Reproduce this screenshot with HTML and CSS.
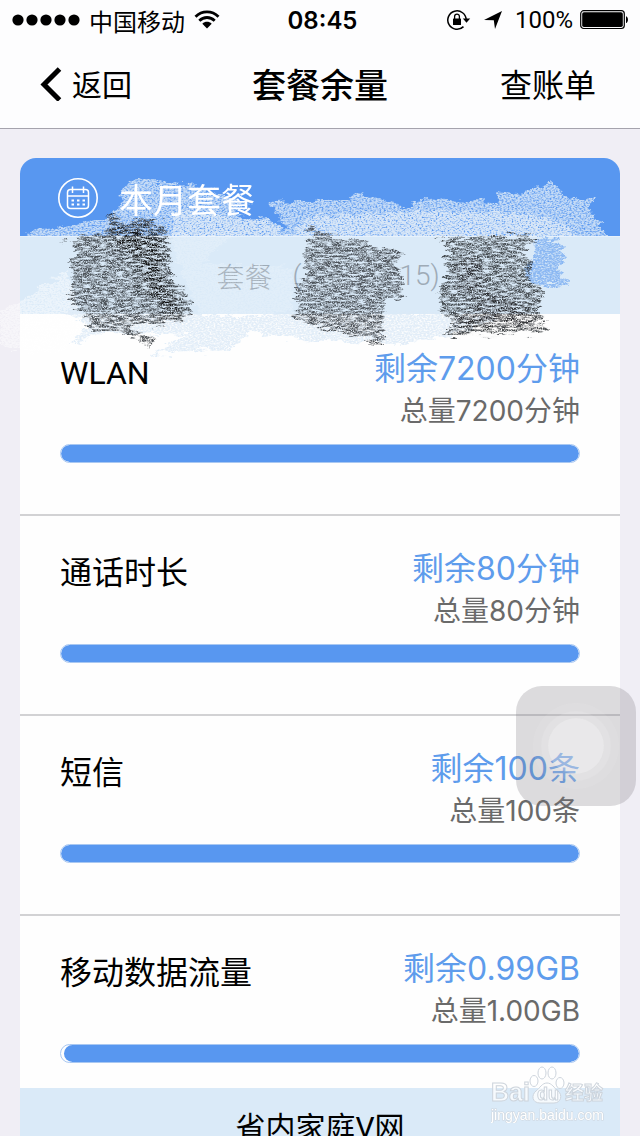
FILE: index.html
```
<!DOCTYPE html>
<html lang="zh-CN">
<head>
  <meta charset="UTF-8" />
  <meta name="viewport" content="width=device-width, initial-scale=1" />
  <title>套餐余量</title>
  <link rel="stylesheet" href="styles.css">
</head>
<body>
  <div class="page">
    <header class="top">
      <div class="status">
        <div class="status-left">
          <svg class="signal" width="68" height="12" viewBox="0 0 68 12">
            <circle cx="6" cy="6" r="5.6"/><circle cx="20" cy="6" r="5.6"/><circle cx="34" cy="6" r="5.6"/><circle cx="48" cy="6" r="5.6"/><circle cx="62" cy="6" r="5.6"/>
          </svg>
          <span>中国移动</span>
          <svg width="26" height="20" viewBox="0 0 26 20">
            <path d="M1.5 6.8C8 .3 18 .3 24.500 6.800M5.300 10.700c4.400-4.300 11-4.300 15.400 0" fill="none" stroke="#000" stroke-width="2.800"/>
            <path d="M13 18.500L8.300 13.700c2.700-2.500 6.700-2.500 9.400 0z"/>
          </svg>
        </div>
        <div class="status-time">08:45</div>
        <div class="status-right">
          <svg width="24" height="22" viewBox="0 0 24 22">
            <path d="M16.500 17.600A9.200 9.200 0 1 1 19.200 11" fill="none" stroke="#000" stroke-width="1.500"/>
            <path d="M15.800 9.500h7.400l-3.700 4.200z"/>
            <rect x="6" y="9.500" width="8" height="6.500" rx="0.600"/>
            <path d="M7.600 10V7.500a2.400 2.400 0 0 1 4.800 0V10" fill="none" stroke="#000" stroke-width="1.300"/>
          </svg>
          <svg width="18" height="18" viewBox="0 0 18 18"><path d="M18 0L11 18 9.800 9.300 0 9z"/></svg>
          <span class="percent">100%</span>
          <svg width="49" height="20" viewBox="0 0 49 20">
            <rect x="0.700" y="0.700" width="43.600" height="17.800" rx="3" fill="none" stroke="#000" stroke-width="1.200"/>
            <rect x="2.200" y="2.200" width="40.600" height="14.800" rx="1.800"/>
            <path d="M46 6.200c2.600.4 2.600 6.400 0 6.800z"/>
          </svg>
        </div>
      </div>
      <nav class="nav">
        <button class="nav-btn back">
          <svg width="22" height="36" viewBox="0 0 22 36"><path d="M19.500 4L4 19.500 19.500 35" fill="none" stroke="#000" stroke-width="5"/></svg>
          <span>返回</span>
        </button>
        <h1>套餐余量</h1>
        <button class="nav-btn bill">查账单</button>
      </nav>
    </header>

    <main class="card">
      <div class="card-head">
        <svg class="calendar" width="40" height="40" viewBox="0 0 40 40" fill="none" stroke="#fff">
          <circle cx="20" cy="20" r="19.200" stroke-width="1.600"/>
          <rect x="9.500" y="11.500" width="21" height="19" rx="3" stroke-width="1.500"/>
          <path d="M9.500 18h21M14.500 8.500v6.500M25.500 8.500v6.500" stroke-width="1.500"/>
          <path d="M13.500 22.500h13.500M13.500 26.500h13.500" stroke-width="2" stroke-dasharray="2.500 3"/>
        </svg>
        <h2>本月套餐</h2>
      </div>
      <div class="plan"><span>套餐</span><span class="paren">(</span><span class="plan-end">15)</span></div>

      <section class="item">
        <div class="info">
          <h3>WLAN</h3>
          <div class="amount"><p class="left">剩余7200分钟</p><p class="total">总量7200分钟</p></div>
        </div>
        <div class="bar"><div class="fill" style="width:100%"></div></div>
      </section>
      <section class="item">
        <div class="info">
          <h3>通话时长</h3>
          <div class="amount"><p class="left">剩余80分钟</p><p class="total">总量80分钟</p></div>
        </div>
        <div class="bar"><div class="fill" style="width:100%"></div></div>
      </section>
      <section class="item">
        <div class="info">
          <h3>短信</h3>
          <div class="amount"><p class="left">剩余100条</p><p class="total">总量100条</p></div>
        </div>
        <div class="bar"><div class="fill" style="width:100%"></div></div>
      </section>
      <section class="item last">
        <div class="info">
          <h3>移动数据流量</h3>
          <div class="amount"><p class="left">剩余0.99GB</p><p class="total">总量1.00GB</p></div>
        </div>
        <div class="bar"><div class="fill" style="width:99.5%"></div></div>
      </section>
      <div class="plan next">省内家庭V网</div>

      <!-- crayon marks over the plan name -->
      <svg class="scribble" viewBox="0 158 640 210" preserveAspectRatio="none" aria-hidden="true">
        <defs>
          <filter id="chalk" x="-5%" y="-10%" width="110%" height="120%" color-interpolation-filters="sRGB">
            <feTurbulence type="fractalNoise" baseFrequency="0.08 0.2" numOctaves="4" seed="4" result="edge"/>
            <feDisplacementMap in="SourceGraphic" in2="edge" scale="14" xChannelSelector="R" yChannelSelector="G" result="shape"/>
            <feTurbulence type="fractalNoise" baseFrequency="0.5 0.7" numOctaves="3" seed="8"/>
            <feColorMatrix values="0 0 0 0 0  0 0 0 0 0  0 0 0 0 0  0 0 0 2.5 -0.5" result="mask"/>
            <feComposite in="shape" in2="mask" operator="in"/>
          </filter>
          <filter id="crayon" x="-10%" y="-10%" width="120%" height="120%" color-interpolation-filters="sRGB">
            <feTurbulence type="fractalNoise" baseFrequency="0.06 0.25" numOctaves="4" seed="3" result="edge"/>
            <feDisplacementMap in="SourceGraphic" in2="edge" scale="18" xChannelSelector="R" yChannelSelector="G" result="shape"/>
            <feTurbulence type="fractalNoise" baseFrequency="0.12 0.5" numOctaves="4" seed="11"/>
            <feColorMatrix values="0 0 0 0 0  0 0 0 0 0  0 0 0 0 0  0 0 0 3 -0.85" result="mask"/>
            <feComposite in="shape" in2="mask" operator="in" result="strokes"/>
            <feTurbulence type="fractalNoise" baseFrequency="0.8" numOctaves="2" seed="6"/>
            <feColorMatrix values="0 0 0 0 0  0 0 0 0 0  0 0 0 0 0  0 0 0 3 -0.7" result="dust"/>
            <feComposite in="strokes" in2="dust" operator="in"/>
          </filter>
          <filter id="soft" x="-20%" y="-20%" width="140%" height="140%"><feGaussianBlur stdDeviation="4"/></filter>
          <clipPath id="headClip"><path d="M20 158h600v78H20z"/></clipPath>
        </defs>
        <g clip-path="url(#headClip)">
          <path filter="url(#chalk)" fill="#d9e8f8" opacity=".85" d="M22 240L36 228 66 227 106 220 124 202 121 190 137 176 160 182 200 186 224 196 250 204 235 212 241 219 266 218 286 230 276 212 271 202 300 201 350 200 355 192 376 198 400 206 416 204 420 199 500 202 495 192 520 194 550 182 566 197 593 200 590 210 598 222 608 240z"/>
          <path filter="url(#chalk)" fill="#dfebf8" opacity=".8" d="M172 212L230 216 268 221 290 236 310 216 400 212 520 212 560 220 580 240 172 240z"/>
        </g>
        <path filter="url(#chalk)" fill="#fff" opacity=".5" d="M0 312L22 300 68 270 76 300 92 340 60 352 20 350 0 346z"/>
        <path filter="url(#chalk)" fill="#fff" opacity=".2" d="M168 234H236L215 250 200 262 290 268 295 312 200 318z"/>
        <path filter="url(#chalk)" fill="#dceaf7" opacity=".8" d="M60 310H180L240 318 290 312H440L500 318 450 335 400 344 300 340 250 332 230 350 150 354 190 335 110 332 70 344 90 326z"/>
        <path filter="url(#chalk)" fill="#82b2f2" opacity=".9" d="M535 238L558 240 566 258 558 268 569 286 530 284 524 270 534 256z"/>
        <g filter="url(#crayon)">
          <path fill="#30353a" opacity=".85" d="M64 240L108 230 110 214 126 221 160 218 152 226 169 228 164 238 172 250 170 272 184 290 192 310 190 318 162 323 128 326 142 334 155 342 150 348 134 338 120 330 92 332 86 320 80 308 66 298 74 286 70 268 74 252 72 242z"/>
          <path filter="url(#soft)" fill="#0c0e10" d="M114 228L144 226 160 240 164 258 162 276 178 302 184 312 160 316 162 300 142 292 144 262 124 256 116 240z"/>
          <path fill="#353a40" opacity=".85" d="M304 224L326 233 402 252 397 263 403 278 402 300 386 301 382 324 386 343 352 336 320 328 290 319 300 304 296 288 306 272 304 250 312 238z"/>
          <path fill="#2d3135" opacity=".85" d="M438 240L510 235 538 239 520 250 534 262 528 276 543 292 542 305 536 312 548 326 544 332 446 334 452 320 438 304 440 290 448 280 444 262 450 250z"/>
          <path filter="url(#soft)" fill="#222426" opacity=".8" d="M460 258L478 260 482 288 530 308 534 326 456 328 460 314 474 300 458 284z"/>
        </g>
      </svg>
    </main>

    <button class="assist" aria-label="AssistiveTouch"><span></span></button>

    <svg class="watermark" width="120" height="58" viewBox="0 0 120 58">
      <g fill="#fff" fill-opacity=".75" stroke="#cdd4dc" stroke-width="1">
        <ellipse cx="43" cy="16" rx="4" ry="5.500"/><ellipse cx="51" cy="8" rx="4" ry="6"/><ellipse cx="61" cy="8" rx="4" ry="6"/><ellipse cx="69" cy="18" rx="4" ry="5.500"/>
        <path d="M56 18c5 0 7 5 11 8 5 4 3 12-4 12H49c-8 0-9-8-4-12 4-3 6-8 11-8z"/>
        <text class="mark-name" x="0" y="36">Bai</text>
        <text class="mark-du" x="46" y="35">du</text>
        <text class="mark-cn" x="74" y="35">经验</text>
      </g>
      <text class="mark-url" x="0" y="55">jingyan.baidu.com</text>
    </svg>
  </div>
</body>
</html>
```

FILE: styles.css
```
* {
  box-sizing: border-box;
}

body {
  margin: 0;
  background: #f0eef5;
  color: #000;
  font-family: Roboto, "Noto Sans CJK SC", sans-serif;
}

h1, h2, h3, p {
  margin: 0;
  font-weight: 400;
}

button {
  padding: 0;
  border: none;
  background: none;
  color: inherit;
  font: inherit;
  cursor: pointer;
}

.page {
  height: 100vh;
  overflow: hidden;
}

.top {
  background: #fdfdfe;
  border-bottom: 1px solid #a5a3ad;
}

.status, .nav {
  display: grid;
  grid-template-columns: 1fr auto 1fr;
  align-items: center;
}

.status {
  height: 40px;
  padding: 0 11px 0 12px;
  font-size: 24px;
}

.status-left, .status-right {
  display: flex;
  align-items: center;
}

.status-left {
  gap: 9px;
}

.status-right {
  justify-content: flex-end;
  gap: 13px;
}

.percent {
  margin-right: -6px;
}

.status-time {
  padding-left: 4px;
  font-family: Inter, sans-serif;
  font-weight: 600;
}

.nav {
  height: 88px;
  padding: 0 44px 2px 40px;
}

.nav-btn {
  display: flex;
  align-items: center;
  gap: 10px;
  font-size: 30px;
}

.nav h1 {
  padding-left: 4px;
  font-size: 34px;
  font-weight: 500;
}

.bill {
  justify-self: end;
  font-size: 32px;
}

.card {
  position: relative;
  margin: 29px 20px 0;
  background: #fefefe;
  border-radius: 16px 16px 0 0;
}

.card-head {
  display: flex;
  align-items: center;
  gap: 21px;
  height: 79px;
  padding: 2px 38px 0;
  background: #5897f0;
  border-bottom: 1px solid #e6f1fc;
  border-radius: 16px 16px 0 0;
  color: #fff;
}

.card-head h2 {
  font-size: 34px;
}

/* title stays readable above the chalk */
.calendar, .card-head h2 {
  position: relative;
  z-index: 1;
}

.plan {
  display: flex;
  justify-content: center;
  align-items: center;
  height: 79px;
  padding-left: 16px;
  background: #daeaf8;
  border-bottom: 2px solid #fefefe;
  color: #9eabb7;
  font-size: 28px;
  font-weight: 300;
}

.paren {
  margin-left: 20px;
}

.plan-end {
  margin-left: 98px;
}

.plan.next {
  height: 75px;
  padding: 0;
  color: #000;
  font-size: 30px;
  font-weight: 400;
}

.item {
  padding: 32px 40px 51px;
  border-bottom: 2px solid #d2d2d4;
}

.item.last {
  padding-bottom: 25px;
  border-bottom: none;
}

.info {
  display: flex;
  justify-content: space-between;
  margin-bottom: 12px;
}

.info h3 {
  font-size: 32px;
  line-height: 50px;
}

.amount {
  font-family: Inter, "Noto Sans CJK SC", sans-serif;
  text-align: right;
  line-height: 42px;
}

.left {
  color: #5e9cec;
  font-size: 32px;
}

.total {
  color: #6a6a6a;
  font-size: 28px;
}

.bar {
  display: flex;
  justify-content: flex-end;
  height: 19px;
  border: 1px solid #a9c8f2;
  border-radius: 10px;
  overflow: hidden;
}

.fill {
  background: #5897f0;
  border-radius: 10px;
}

.scribble {
  position: absolute;
  top: 0;
  left: -20px;
  width: calc(100% + 40px);
  height: 210px;
  pointer-events: none;
}

/* floating assist button */
.assist {
  position: fixed;
  top: 686px;
  right: 4px;
  display: flex;
  align-items: center;
  justify-content: center;
  width: 120px;
  height: 120px;
  background: rgba(120, 115, 125, 0.25);
  border-radius: 26px;
}

.assist span {
  width: 56px;
  height: 56px;
  background: rgba(255, 255, 255, 0.35);
  border-radius: 50%;
  box-shadow: 0 0 0 7px rgba(255, 255, 255, 0.1), 0 0 0 15px rgba(255, 255, 255, 0.08);
}

.watermark {
  position: fixed;
  right: 29px;
  bottom: 13px;
  font-family: "Liberation Sans", "Noto Sans CJK SC", sans-serif;
}

.mark-name {
  font-size: 25px;
  font-weight: 700;
}

.mark-du {
  font-size: 18px;
  font-weight: 700;
}

.mark-cn {
  font-size: 19px;
  font-weight: 700;
}

.mark-url {
  fill: #fff;
  stroke: #cdd4dc;
  stroke-width: 1px;
  paint-order: stroke;
  font-size: 14px;
}
```
